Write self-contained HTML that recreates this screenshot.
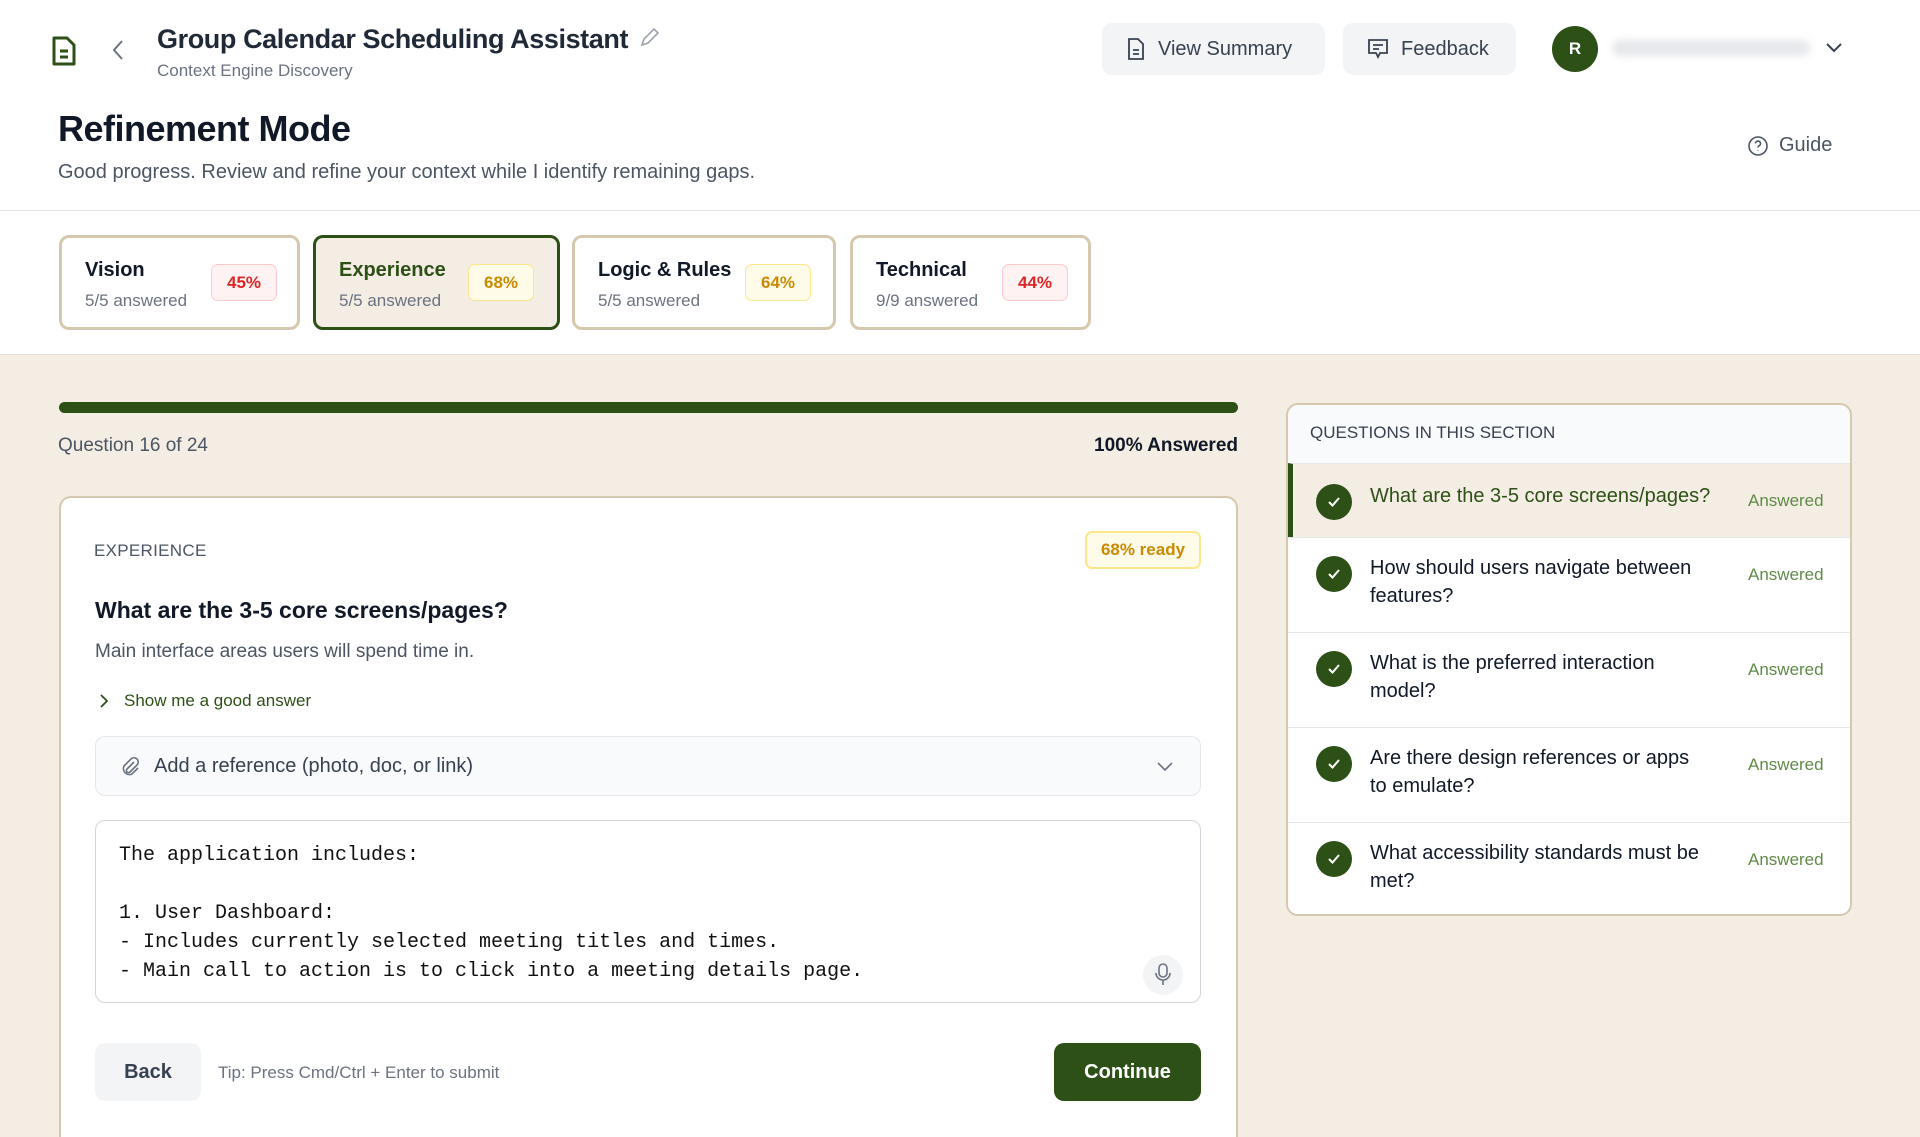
<!DOCTYPE html>
<html><head><meta charset="utf-8"><style>
*{box-sizing:border-box;margin:0;padding:0}
html,body{width:1920px;height:1137px;overflow:hidden}
body{font-family:"Liberation Sans",sans-serif;color:#111827;background:#f4ede3}
#w{position:relative;width:1920px;height:1137px;overflow:hidden;background:#f4ede3}
.a{position:absolute}
.top{left:0;top:0;width:1920px;height:355px;background:#fff;border-bottom:1px solid #e5e0d6}
.btn{background:#f3f4f6;border-radius:10px;display:flex;align-items:center;gap:12px;font-size:20px;color:#374151;padding-left:24px}
.card{border:3px solid #d6c8ae;border-radius:10px;background:#fff;height:95px}
.card .t{position:absolute;left:23px;top:21px;font-size:20px;font-weight:bold;color:#111827}
.card .s{position:absolute;left:23px;top:53px;font-size:17px;color:#6b7280}
.pill{position:absolute;top:26px;height:37px;border-radius:7px;font-size:17px;font-weight:bold;display:flex;align-items:center;justify-content:center}
.red{background:#fef2f2;border:1px solid #fecaca;color:#dc2626}
.yel{background:#fefce8;border:1px solid #fde68a;color:#ca8a04}
.row{left:0;width:562px;border-top:1px solid #e5e7eb;background:#fff}
.chk{position:absolute;left:28px;width:36px;height:36px;border-radius:50%;background:#2d5016}
.rt{position:absolute;left:82px;width:350px;font-size:20px;line-height:28px;color:#111827}
.ans{position:absolute;left:460px;font-size:17px;color:#5f8a47}
.mono{font-family:"Liberation Mono",monospace;font-size:20px;color:#111;white-space:pre;line-height:29px}
</style></head><body><div id="w">
<div class="a top"></div>
<svg class="a" style="left:50px;top:35px" width="28" height="32" viewBox="0 0 28 32"><path d="M4 3h13l7 7v19H4z" fill="none" stroke="#2d5016" stroke-width="3" stroke-linejoin="round"/><path d="M10 16h8M10 22h8" stroke="#2d5016" stroke-width="3"/></svg>
<svg class="a" style="left:110px;top:38px" width="16" height="24" viewBox="0 0 16 24"><path d="M12 3L4 12l8 9" fill="none" stroke="#6b7280" stroke-width="2"/></svg>
<div class="a" style="left:157px;top:24px;font-size:27px;font-weight:bold;color:#1f2937;letter-spacing:-0.4px">Group Calendar Scheduling Assistant</div>
<svg class="a" style="left:638px;top:27px" width="22" height="22" viewBox="0 0 22 22"><path d="M4 18l2-6L16 2l4 4-10 10z" fill="none" stroke="#9ca3af" stroke-width="1.6"/></svg>
<div class="a" style="left:157px;top:61px;font-size:17px;color:#6b7280">Context Engine Discovery</div>
<div class="a btn" style="left:1102px;top:23px;width:223px;height:52px"><svg width="20" height="22" viewBox="0 0 20 22"><path d="M3 1h9l5 5v15H3z" fill="none" stroke="#374151" stroke-width="1.8"/><path d="M7 12h6M7 16h6" stroke="#374151" stroke-width="1.8"/></svg>View Summary</div>
<div class="a btn" style="left:1343px;top:23px;width:173px;height:52px"><svg width="22" height="22" viewBox="0 0 22 22"><path d="M2 2h18v13h-7l-2 4-2-4H2z" fill="none" stroke="#374151" stroke-width="1.8"/><path d="M6 7h10M6 11h6" stroke="#374151" stroke-width="1.8"/></svg>Feedback</div>
<div class="a" style="left:1552px;top:26px;width:46px;height:46px;border-radius:50%;background:#2d5016;color:#fff;font-weight:bold;font-size:17px;display:flex;align-items:center;justify-content:center">R</div>
<div class="a" style="left:1612px;top:40px;width:198px;height:16px;border-radius:8px;background:#e5e7eb;filter:blur(4px)"></div>
<svg class="a" style="left:1825px;top:42px" width="18" height="12" viewBox="0 0 18 12"><path d="M2 2l7 7 7-7" fill="none" stroke="#374151" stroke-width="2"/></svg>
<div class="a" style="left:58px;top:108px;font-size:36px;font-weight:bold;color:#111827;letter-spacing:-0.5px">Refinement Mode</div>
<div class="a" style="left:58px;top:161px;font-size:20px;color:#4b5563">Good progress. Review and refine your context while I identify remaining gaps.</div>
<div class="a" style="left:1747px;top:134px;font-size:20px;color:#4b5563;display:flex;align-items:center;gap:10px"><svg width="22" height="22" viewBox="0 0 22 22"><circle cx="11" cy="11" r="9" fill="none" stroke="#4b5563" stroke-width="1.6"/><path d="M8.5 8.5a2.5 2.5 0 1 1 3.5 2.3c-.7.4-1 .9-1 1.7M11 15.5v.5" fill="none" stroke="#4b5563" stroke-width="1.6"/></svg>Guide</div>
<div class="a" style="left:0;top:210px;width:1920px;height:1px;background:#e5e7eb"></div>
<div class="a card" style="left:59px;top:235px;width:241px"><div class="t">Vision</div><div class="s">5/5 answered</div><div class="pill red" style="left:149px;width:66px">45%</div></div>
<div class="a card" style="left:313px;top:235px;width:247px;border-color:#2d5016;background:#f4ede3"><div class="t" style="color:#2d5016">Experience</div><div class="s">5/5 answered</div><div class="pill yel" style="left:152px;width:66px">68%</div></div>
<div class="a card" style="left:572px;top:235px;width:264px"><div class="t">Logic &amp; Rules</div><div class="s">5/5 answered</div><div class="pill yel" style="left:170px;width:66px">64%</div></div>
<div class="a card" style="left:850px;top:235px;width:241px"><div class="t">Technical</div><div class="s">9/9 answered</div><div class="pill red" style="left:149px;width:66px">44%</div></div>
<div class="a" style="left:59px;top:402px;width:1179px;height:11px;border-radius:6px;background:#2d5016"></div>
<div class="a" style="left:58px;top:435px;font-size:19px;color:#4b5563">Question 16 of 24</div>
<div class="a" style="left:1000px;top:435px;width:238px;text-align:right;font-size:19px;font-weight:bold;color:#111827">100% Answered</div>
<div class="a" style="left:59px;top:496px;width:1179px;height:641px;background:#fff;border:2px solid #d6c8ae;border-bottom:none;border-radius:12px 12px 0 0"></div>
<div class="a" style="left:94px;top:541px;font-size:17px;color:#4b5563;letter-spacing:0.3px">EXPERIENCE</div>
<div class="a" style="left:1085px;top:531px;width:116px;height:38px;border-radius:7px;background:#fefce8;border:2px solid #fde68a;color:#ca8a04;font-size:17px;font-weight:bold;display:flex;align-items:center;justify-content:center">68% ready</div>
<div class="a" style="left:95px;top:597px;font-size:23px;font-weight:bold;color:#111827">What are the 3-5 core screens/pages?</div>
<div class="a" style="left:95px;top:641px;font-size:19px;color:#4b5563">Main interface areas users will spend time in.</div>
<svg class="a" style="left:98px;top:693px" width="12" height="16" viewBox="0 0 12 16"><path d="M3 2l6 6-6 6" fill="none" stroke="#2d5016" stroke-width="1.8"/></svg>
<div class="a" style="left:124px;top:691px;font-size:17px;color:#2d5016">Show me a good answer</div>
<div class="a" style="left:95px;top:736px;width:1106px;height:60px;border:1px solid #e5e7eb;border-radius:10px;background:#f9fafb"></div>
<svg class="a" style="left:120px;top:756px" width="20" height="22" viewBox="0 0 20 22"><path d="M14 6l-7 7a2 2 0 0 0 3 3l7-7a4 4 0 0 0-6-6l-7 7a6 6 0 0 0 8 8l6-6" fill="none" stroke="#6b7280" stroke-width="1.6"/></svg>
<div class="a" style="left:154px;top:755px;font-size:20px;color:#374151">Add a reference (photo, doc, or link)</div>
<svg class="a" style="left:1156px;top:761px" width="18" height="12" viewBox="0 0 18 12"><path d="M2 2l7 7 7-7" fill="none" stroke="#6b7280" stroke-width="1.6"/></svg>
<div class="a" style="left:95px;top:820px;width:1106px;height:183px;border:1.5px solid #d1d5db;border-radius:10px;background:#fff"></div>
<div class="a mono" style="left:119px;top:841px">The application includes:

1. User Dashboard:
- Includes currently selected meeting titles and times.
- Main call to action is to click into a meeting details page.</div>
<div class="a" style="left:1143px;top:955px;width:40px;height:40px;border-radius:50%;background:#f3f4f6"></div>
<svg class="a" style="left:1153px;top:962px" width="20" height="26" viewBox="0 0 20 26"><rect x="6" y="2" width="8" height="13" rx="4" fill="none" stroke="#6b7280" stroke-width="1.6"/><path d="M3 11a7 7 0 0 0 14 0M10 18v5" fill="none" stroke="#6b7280" stroke-width="1.6"/></svg>
<div class="a" style="left:95px;top:1043px;width:106px;height:58px;border-radius:10px;background:#f3f4f6;font-size:20px;font-weight:bold;color:#374151;display:flex;align-items:center;justify-content:center">Back</div>
<div class="a" style="left:218px;top:1063px;font-size:17px;color:#6b7280">Tip: Press Cmd/Ctrl + Enter to submit</div>
<div class="a" style="left:1054px;top:1043px;width:147px;height:58px;border-radius:10px;background:#2d5016;font-size:20px;font-weight:bold;color:#fff;display:flex;align-items:center;justify-content:center">Continue</div>
<div class="a" style="left:1286px;top:403px;width:566px;height:513px;border:2px solid #d6c8ae;border-radius:12px;background:#f9fafb;overflow:hidden">
<div class="a" style="left:22px;top:18px;font-size:17px;color:#374151;font-weight:500">QUESTIONS IN THIS SECTION</div>
<div class="a row" style="top:58px;height:74px;background:#f4ede3;border-left:5px solid #2d5016"><div class="chk" style="left:23px;top:20px"></div><svg class="a" style="left:34px;top:31px" width="14" height="14" viewBox="0 0 14 14"><path d="M2 7l3.5 3.5L12 3" fill="none" stroke="#fff" stroke-width="2"/></svg><div class="rt" style="left:77px;top:18px;width:380px;color:#2d5016">What are the 3-5 core screens/pages?</div><div class="ans" style="left:455px;top:27px">Answered</div></div>
<div class="a row" style="top:132px;height:95px"><div class="chk" style="top:18px"></div><svg class="a" style="left:39px;top:29px" width="14" height="14" viewBox="0 0 14 14"><path d="M2 7l3.5 3.5L12 3" fill="none" stroke="#fff" stroke-width="2"/></svg><div class="rt" style="top:16px">How should users navigate between features?</div><div class="ans" style="top:27px">Answered</div></div>
<div class="a row" style="top:227px;height:95px"><div class="chk" style="top:18px"></div><svg class="a" style="left:39px;top:29px" width="14" height="14" viewBox="0 0 14 14"><path d="M2 7l3.5 3.5L12 3" fill="none" stroke="#fff" stroke-width="2"/></svg><div class="rt" style="top:16px;width:320px">What is the preferred interaction model?</div><div class="ans" style="top:27px">Answered</div></div>
<div class="a row" style="top:322px;height:95px"><div class="chk" style="top:18px"></div><svg class="a" style="left:39px;top:29px" width="14" height="14" viewBox="0 0 14 14"><path d="M2 7l3.5 3.5L12 3" fill="none" stroke="#fff" stroke-width="2"/></svg><div class="rt" style="top:16px;width:340px">Are there design references or apps to emulate?</div><div class="ans" style="top:27px">Answered</div></div>
<div class="a row" style="top:417px;height:96px"><div class="chk" style="top:18px"></div><svg class="a" style="left:39px;top:29px" width="14" height="14" viewBox="0 0 14 14"><path d="M2 7l3.5 3.5L12 3" fill="none" stroke="#fff" stroke-width="2"/></svg><div class="rt" style="top:16px">What accessibility standards must be met?</div><div class="ans" style="top:27px">Answered</div></div>
</div>
</div></body></html>
